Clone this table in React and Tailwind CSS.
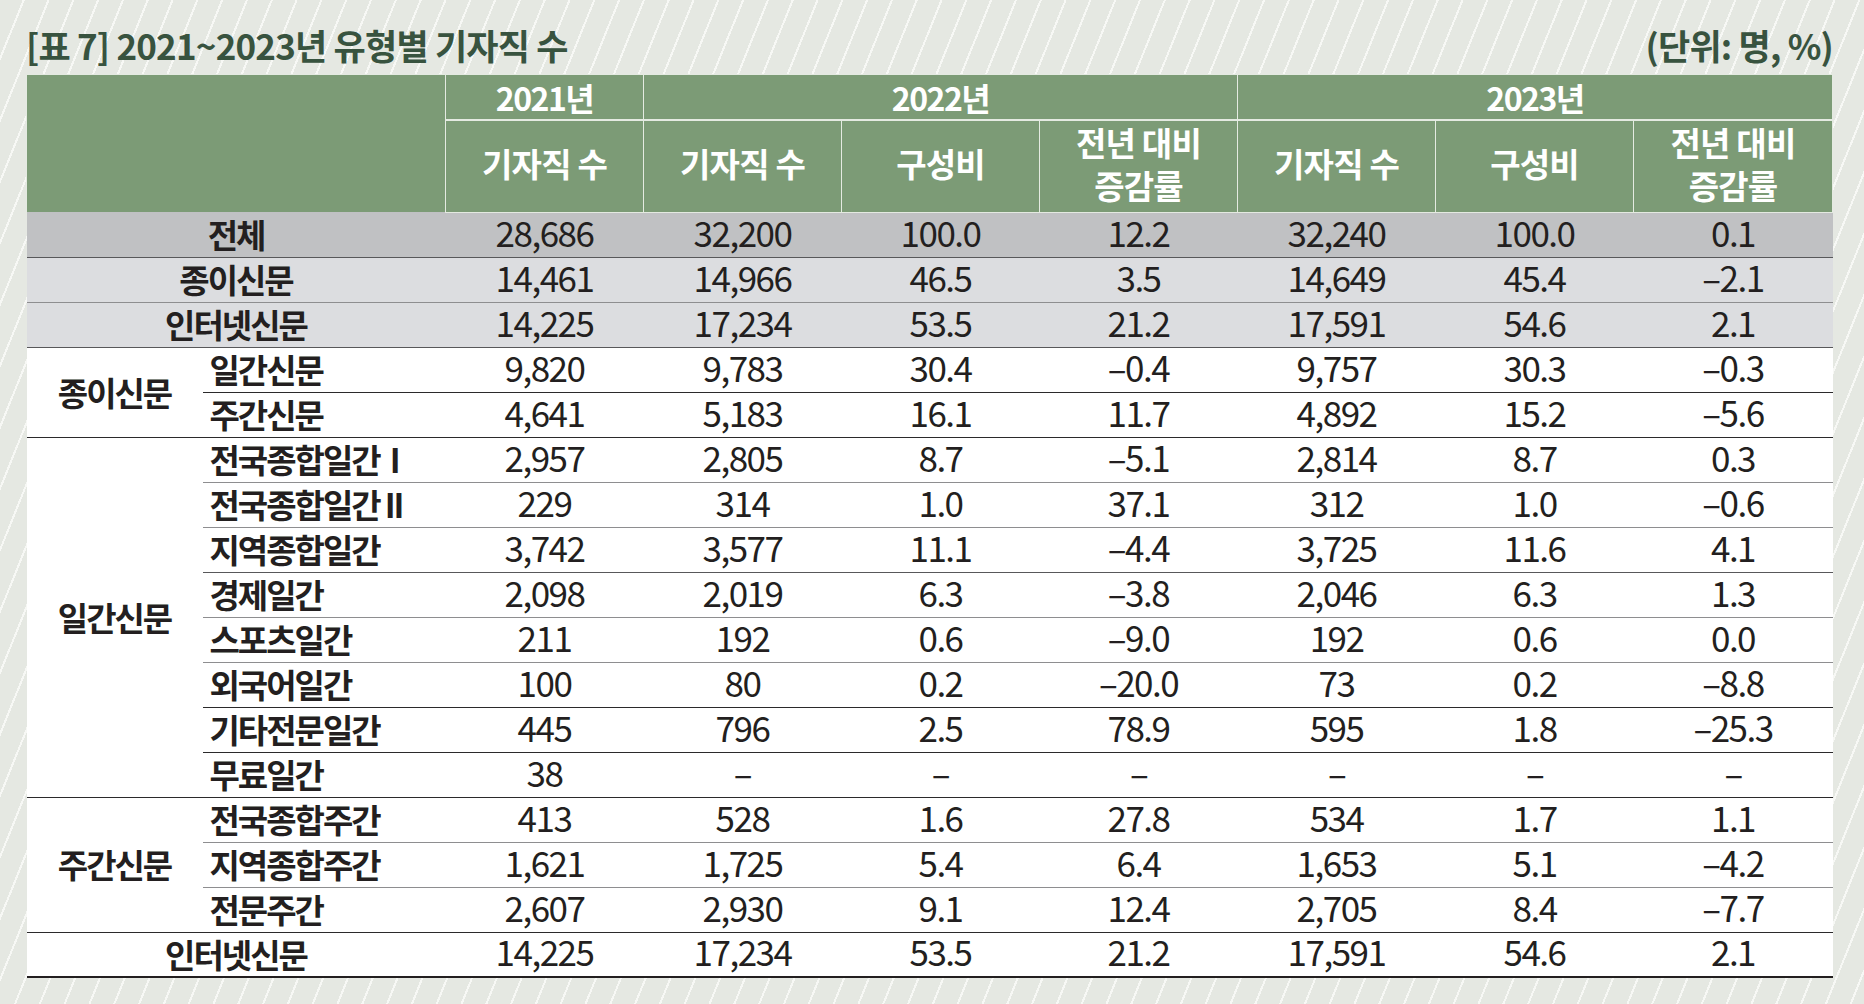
import React from "react";

const DARK = "border-b-[#2b2a2b]";
const MID = "border-b-[#58585a]";
const GRAY = "border-b-[#8e8e90]";

// 표 본문 데이터
const rows = [
  { label: "전체", bg: "bg-[#c0c1c3]", line: MID, v: ["28,686", "32,200", "100.0", "12.2", "32,240", "100.0", "0.1"] },
  { label: "종이신문", bg: "bg-[#dcdde0]", line: GRAY, v: ["14,461", "14,966", "46.5", "3.5", "14,649", "45.4", "–2.1"] },
  { label: "인터넷신문", bg: "bg-[#dcdde0]", line: MID, v: ["14,225", "17,234", "53.5", "21.2", "17,591", "54.6", "2.1"] },
  { group: "종이신문", span: 2, groupLine: DARK, sub: "일간신문", line: DARK, v: ["9,820", "9,783", "30.4", "–0.4", "9,757", "30.3", "–0.3"] },
  { sub: "주간신문", line: DARK, v: ["4,641", "5,183", "16.1", "11.7", "4,892", "15.2", "–5.6"] },
  { group: "일간신문", span: 8, groupLine: DARK, sub: "전국종합일간", roman: "I", line: GRAY, v: ["2,957", "2,805", "8.7", "–5.1", "2,814", "8.7", "0.3"] },
  { sub: "전국종합일간", roman: "II", line: GRAY, v: ["229", "314", "1.0", "37.1", "312", "1.0", "–0.6"] },
  { sub: "지역종합일간", line: MID, v: ["3,742", "3,577", "11.1", "–4.4", "3,725", "11.6", "4.1"] },
  { sub: "경제일간", line: GRAY, v: ["2,098", "2,019", "6.3", "–3.8", "2,046", "6.3", "1.3"] },
  { sub: "스포츠일간", line: GRAY, v: ["211", "192", "0.6", "–9.0", "192", "0.6", "0.0"] },
  { sub: "외국어일간", line: DARK, v: ["100", "80", "0.2", "–20.0", "73", "0.2", "–8.8"] },
  { sub: "기타전문일간", line: DARK, v: ["445", "796", "2.5", "78.9", "595", "1.8", "–25.3"] },
  { sub: "무료일간", line: DARK, v: ["38", "–", "–", "–", "–", "–", "–"] },
  { group: "주간신문", span: 3, groupLine: DARK, sub: "전국종합주간", line: GRAY, v: ["413", "528", "1.6", "27.8", "534", "1.7", "1.1"] },
  { sub: "지역종합주간", line: GRAY, v: ["1,621", "1,725", "5.4", "6.4", "1,653", "5.1", "–4.2"] },
  { sub: "전문주간", line: DARK, v: ["2,607", "2,930", "9.1", "12.4", "2,705", "8.4", "–7.7"] },
  { label: "인터넷신문", bg: "bg-white", line: "border-b-2 border-b-[#231f20]", v: ["14,225", "17,234", "53.5", "21.2", "17,591", "54.6", "2.1"] },
];

const labelCls = "font-bold text-[33px] leading-none tracking-[-2px] text-[#231f20]";
const numCls = "text-[35px] leading-none tracking-[-1.5px] text-[#231f20] text-center pb-[7px]";
const yearCls = "border border-[#e4eae1] border-b-2 text-white font-semibold text-[32px] tracking-[-1.5px] text-center leading-none";
const headCls = "border border-[#e4eae1] text-white font-semibold text-[33px] tracking-[-0.8px] text-center leading-[43px] pb-[5px]";

const App = () => {
  return (
    <div className="w-[1864px] h-[1004px] overflow-hidden bg-[#e5e8e2] bg-[repeating-linear-gradient(112deg,#e5e8e2_0px,#e5e8e2_21px,#f7f8f5_21px,#f7f8f5_23px)] font-['Noto_Sans_CJK_KR','Noto_Sans',sans-serif] pl-[26px] pr-[31px] pt-[25px]">
      {/* 제목 */}
      <div className="flex justify-between items-center h-[40px] mb-[9px] text-[#38533f] font-semibold text-[35px] tracking-[-0.8px]">
        <span>[표 7] 2021~2023년 유형별 기자직 수</span>
        <span>(단위: 명, %)</span>
      </div>

      <table className="w-[1807px] table-fixed border-collapse">
        <colgroup>
          <col className="w-[176px]" />
          <col className="w-[243px]" />
          <col className="w-[198px]" />
          <col className="w-[198px]" />
          <col className="w-[198px]" />
          <col className="w-[198px]" />
          <col className="w-[198px]" />
          <col className="w-[198px]" />
          <col />
        </colgroup>
        <thead className="bg-[#7c9b76]">
          <tr className="h-[45px]">
            <th colSpan={2} rowSpan={2} className="border border-[#e4eae1] border-b-0"></th>
            <th className={yearCls}>2021년</th>
            <th colSpan={3} className={yearCls}>2022년</th>
            <th colSpan={3} className={yearCls}>2023년</th>
          </tr>
          <tr className="h-[91px]">
            <th className={headCls}>기자직 수</th>
            <th className={headCls}>기자직 수</th>
            <th className={headCls}>구성비</th>
            <th className={headCls}>
              전년 대비
              <br />
              증감률
            </th>
            <th className={headCls}>기자직 수</th>
            <th className={headCls}>구성비</th>
            <th className={headCls}>
              전년 대비
              <br />
              증감률
            </th>
          </tr>
        </thead>
        <tbody>
          {rows.map((r, i) => (
            <tr key={i} className={"h-[45px] " + (r.bg || "bg-white")}>
              {r.label && (
                <td colSpan={2} className={"p-0 h-[45px] text-center border-b " + r.line + " " + labelCls}>
                  {r.label}
                </td>
              )}
              {r.group && (
                <td rowSpan={r.span} className={"p-0 text-center border-b " + r.groupLine + " " + labelCls}>
                  {r.group}
                </td>
              )}
              {r.sub && (
                <td className={"p-0 h-[45px] pl-[7px] text-left whitespace-nowrap border-b " + r.line + " " + labelCls}>
                  {r.sub}
                  {r.roman && <span className={r.roman === "I" ? "ml-[10px]" : "ml-[5px]"}>{r.roman}</span>}
                </td>
              )}
              {r.v.map((n, j) => (
                <td key={j} className={"p-0 h-[45px] border-b " + r.line + " " + numCls}>
                  {n}
                </td>
              ))}
            </tr>
          ))}
        </tbody>
      </table>
    </div>
  );
};

export default App;
